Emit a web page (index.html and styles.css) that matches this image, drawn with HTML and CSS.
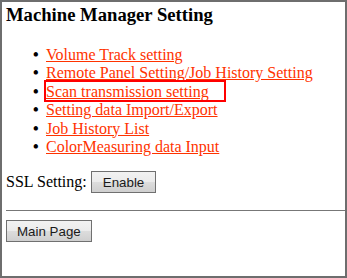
FILE: index.html
```html
<!DOCTYPE html>
<html>
<head>
<meta charset="utf-8">
<link rel="stylesheet" href="styles.css">
</head>
<body>
<div class="frame">
  <h1 class="title">Machine Manager Setting</h1>
  <ul class="menu">
    <li><a href="#">Volume Track setting</a></li>
    <li><a href="#">Remote Panel Setting/Job History Setting</a></li>
    <li class="marked"><a href="#">Scan transmission setting</a><span class="mark"></span></li>
    <li><a href="#">Setting data Import/Export</a></li>
    <li><a href="#">Job History List</a></li>
    <li><a href="#">ColorMeasuring data Input</a></li>
  </ul>
  <div class="ssl">
    <span>SSL Setting:</span>
    <button class="btn" type="button">Enable</button>
  </div>
  <hr class="rule">
  <button class="btn btn-main" type="button">Main Page</button>
</div>
</body>
</html>
```
FILE: styles.css
```css
html, body {
  margin: 0;
  padding: 0;
  background: #ffffff;
}
body {
  font-family: "Liberation Serif", "Times New Roman", serif;
  font-size: 16px;
  color: #000;
}
.frame {
  box-sizing: border-box;
  width: 347px;
  height: 278px;
  border: 2px solid #6e6e6e;
  padding: 0 0 0 4px;
}
.title {
  font-size: 18.67px;
  font-weight: bold;
  margin: 2px 0 0 0;
  line-height: 21px;
}
.menu {
  margin: 21px 0 0 0;
  padding-left: 40px;
  line-height: 18.4px;
  list-style: none;
}
.menu li {
  position: relative;
  color: #000;
}
.menu li::before {
  content: "\2022";
  display: inline-block;
  width: 13px;
  margin-left: -13px;
  color: #000;
  font-weight: bold;
}
.menu a {
  color: #ff3300;
  text-decoration: underline;
}
.mark {
  position: absolute;
  left: -2px;
  top: -3px;
  width: 178px;
  height: 18px;
  border: 2px solid #ff0000;
}
.ssl {
  margin-top: 15px;
  display: flex;
  align-items: center;
  gap: 4px;
  height: 22px;
}
.btn {
  font-family: "Liberation Sans", Arial, sans-serif;
  font-size: 13.33px;
  color: #1a1a1a;
  height: 22px;
  padding: 0 11px;
  border: 1px solid #707070;
  border-radius: 0;
  background: linear-gradient(#f2f2f2, #ebebeb 50%, #dddddd 50%, #cfcfcf);
  margin: 0;
}
.btn-main {
  padding: 0 10px;
}
.rule {
  margin: 17px 0 9px 0;
  border: 0;
  border-top: 1px solid #777;
  height: 0;
}
```
